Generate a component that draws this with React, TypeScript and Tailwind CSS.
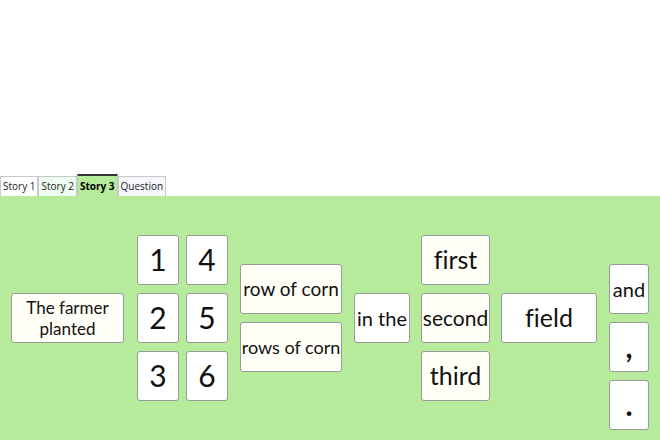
import React from "react";

const font = { fontFamily: "Lato, 'Noto Sans', sans-serif", fontVariantLigatures: "none" as const };

function Card({ children, className = "" }: { children: React.ReactNode; className?: string }) {
  return (
    <div
      className={`flex shrink-0 items-center justify-center whitespace-nowrap rounded-[3px] border border-[#9a9a9a] text-center leading-tight text-[#111] ${className}`}
    >
      {children}
    </div>
  );
}

const tabs = [
  { label: "Story 1", bg: "bg-white", active: false },
  { label: "Story 2", bg: "bg-[#eefcf2]", active: false },
  { label: "Story 3", bg: "bg-[#b6eb9b]", active: true },
  { label: "Question", bg: "bg-[#f6f6fd]", active: false },
];

export default function App() {
  return (
    <div className="flex h-[440px] w-[660px] flex-col overflow-hidden bg-white">
      <div className="h-[174px] shrink-0" />
      <div className="flex h-[22px] shrink-0 items-end" style={{ fontFamily: "'Open Sans', 'Noto Sans', sans-serif" }}>
        {tabs.map((t) =>
          t.active ? (
            <div
              key={t.label}
              className={`flex h-[22px] items-center border-x border-t-2 border-x-[#c8c8c8] border-t-[#333] px-[2px] text-[10px] font-bold text-black ${t.bg}`}
            >
              {t.label}
            </div>
          ) : (
            <div
              key={t.label}
              className={`flex h-[20px] items-center border border-b-0 border-[#c8c8c8] px-[2px] text-[10px] text-[#222] ${t.bg}`}
            >
              {t.label}
            </div>
          )
        )}
      </div>
      <div className="flex h-[244px] shrink-0 items-center overflow-hidden bg-[#b6eb9b] pl-[11px]" style={font}>
        <Card className="h-[50px] w-[113px] bg-[#fffff7] text-[17px] leading-[23px]">
          The farmer
          <br />
          planted
        </Card>

        <div className="ml-[13px] grid shrink-0 grid-flow-col grid-cols-2 grid-rows-3 gap-x-[7px] gap-y-[8px]">
          {["1", "2", "3", "4", "5", "6"].map((n) => (
            <Card key={n} className="h-[50px] w-[42px] bg-white text-[30px]">
              {n}
            </Card>
          ))}
        </div>

        <div className="ml-[12px] flex shrink-0 flex-col gap-[8px]">
          <Card className="h-[50px] w-[102px] bg-[#fffff7] text-[19px]">row of corn</Card>
          <Card className="h-[50px] w-[102px] bg-[#fffff7] text-[18px]">rows of corn</Card>
        </div>

        <Card className="ml-[12px] h-[50px] w-[56px] bg-white text-[20px]">in the</Card>

        <div className="ml-[11px] flex shrink-0 flex-col gap-[8px]">
          <Card className="h-[50px] w-[69px] bg-[#fffff7] text-[25px]">first</Card>
          <Card className="h-[50px] w-[69px] bg-[#fffff7] text-[21px]">second</Card>
          <Card className="h-[50px] w-[69px] bg-[#fffff7] text-[25px]">third</Card>
        </div>

        <Card className="ml-[11px] h-[50px] w-[96px] bg-white text-[25px]">field</Card>

        <div className="ml-[12px] mt-[68px] flex shrink-0 flex-col gap-[8px] self-start">
          <Card className="h-[50px] w-[40px] bg-white text-[20px]">and</Card>
          <Card className="h-[50px] w-[40px] items-end bg-white pb-[6px] text-[30px] font-bold">,</Card>
          <Card className="h-[50px] w-[40px] items-end bg-white pb-[6px] text-[30px] font-bold">.</Card>
        </div>
      </div>
    </div>
  );
}
